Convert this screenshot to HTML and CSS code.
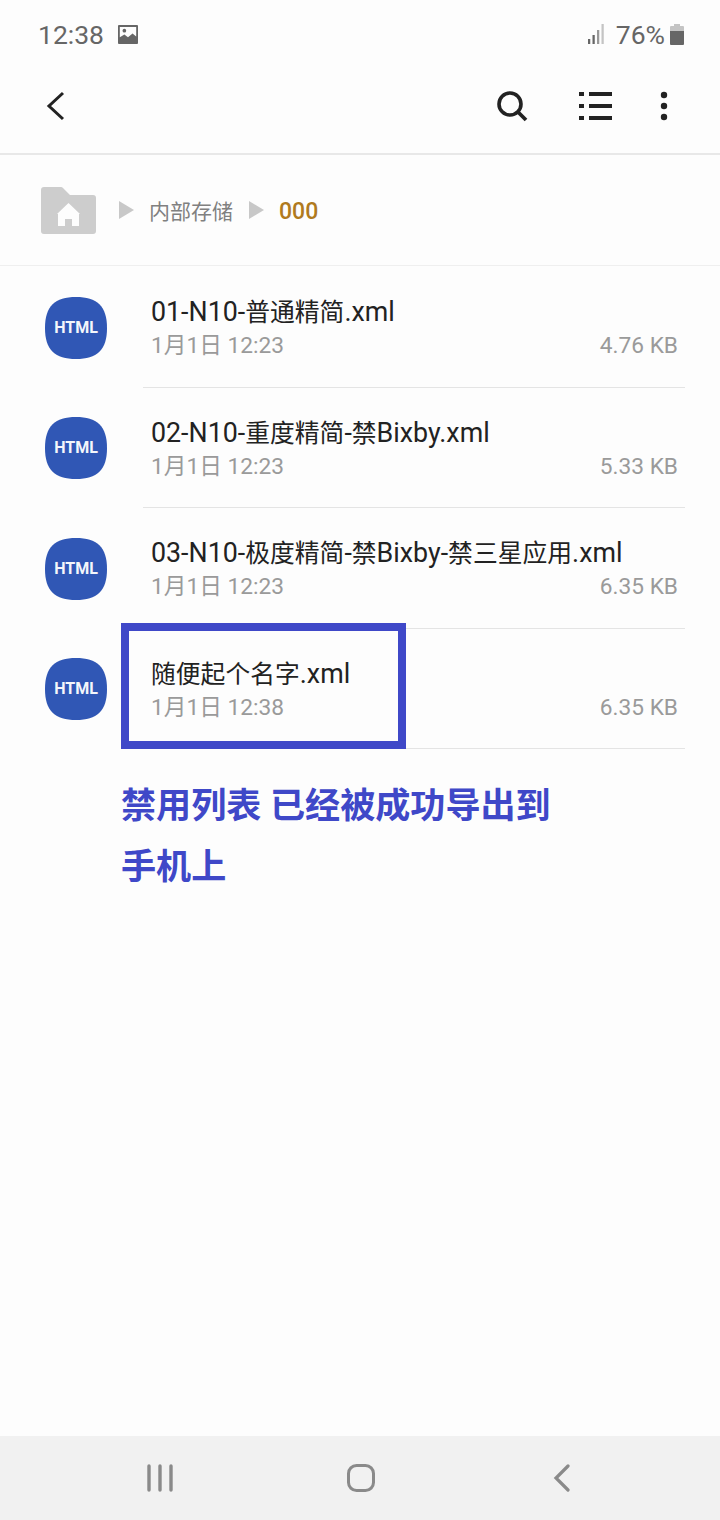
FILE: index.html
```html
<!DOCTYPE html>
<html lang="zh-CN">
<head>
    <meta charset="UTF-8">
    <meta name="viewport" content="width=device-width, initial-scale=1.0">
    <title>内部存储</title>
    <link rel="stylesheet" href="styles.css">
</head>
<body>
    <div class="phone">
        <div class="status-bar">
            <div class="status-left">
                <span class="clock">12:38</span>
                <svg class="status-pic" width="20" height="19" viewBox="0 0 22 20" preserveAspectRatio="none">
                    <path fill="#666" fill-rule="evenodd" d="M1 0h20a1 1 0 0 1 1 1v18a1 1 0 0 1-1 1H1a1 1 0 0 1-1-1V1a1 1 0 0 1 1-1zM2 2v11l5-3 4 3 5-4 4 3V2z"/>
                    <circle cx="7" cy="6" r="2" fill="#666"/>
                </svg>
            </div>
            <div class="status-right">
                <svg width="18" height="20" viewBox="0 0 20 20" preserveAspectRatio="none">
                    <rect x="0" y="15" width="2.500" height="5" fill="#666"/>
                    <rect x="5" y="11" width="2.500" height="9" fill="#666"/>
                    <rect x="10" y="6" width="2.500" height="14" fill="#999"/>
                    <rect x="15" y="0" width="2.500" height="20" fill="#c4c4c4"/>
                </svg>
                <span class="battery-text">76%</span>
                <svg width="14" height="21" viewBox="0 0 14 21">
                    <path fill="#c4c4c4" d="M4 0h6v2h3a1 1 0 0 1 1 1v5H0V3a1 1 0 0 1 1-1h3z"/>
                    <path fill="#666" d="M0 7h14v13a1 1 0 0 1-1 1H1a1 1 0 0 1-1-1z"/>
                </svg>
            </div>
        </div>

        <div class="toolbar">
            <svg class="back" width="20" height="30" viewBox="0 0 20 30">
                <path d="M17 2 L3 15 L17 28" fill="none" stroke="#222" stroke-width="3"/>
            </svg>
            <div class="toolbar-actions">
                <svg width="32" height="32" viewBox="0 0 32 32">
                    <circle cx="14" cy="14" r="11" fill="none" stroke="#222" stroke-width="3.600"/>
                    <path d="M22 22 L30 30" stroke="#222" stroke-width="3.800"/>
                </svg>
                <svg class="list-icon" width="34" height="30" viewBox="0 0 34 30">
                    <path fill="#222" d="M0 1h5v4H0zM10 1h23v4H10zM0 13h5v4H0zM10 13h23v4H10zM0 25h5v4H0zM10 25h23v4H10z"/>
                </svg>
                <svg width="8" height="30" viewBox="0 0 8 30">
                    <circle cx="4" cy="4" r="3.200" fill="#222"/>
                    <circle cx="4" cy="15" r="3.200" fill="#222"/>
                    <circle cx="4" cy="26" r="3.200" fill="#222"/>
                </svg>
            </div>
        </div>

        <div class="crumbs">
            <svg class="crumb-home" width="55" height="47" viewBox="0 0 55 47">
                <path fill="#cdcdcd" d="M3 0h17a3 3 0 0 1 2 1l7 7h23a3 3 0 0 1 3 3v33a3 3 0 0 1-3 3H3a3 3 0 0 1-3-3V3a3 3 0 0 1 3-3z"/>
                <path fill="#fdfdfd" d="M27.500 16 L39 27 H38 V39 H31 V32 H24 V39 H17 V27 H16 z"/>
            </svg>
            <span class="crumb-arrow"></span>
            <span class="crumb-text">内部存储</span>
            <span class="crumb-arrow"></span>
            <span class="crumb-current">000</span>
        </div>

        <div class="file-list">
            <div class="file-row">
                <svg class="file-icon" width="62" height="62" viewBox="0 0 62 62">
                    <path fill="#3057b5" d="M31 0C52 0 62 9 62 31S52 62 31 62 0 53 0 31 10 0 31 0z"/>
                    <text x="31" y="35.500" text-anchor="middle">HTML</text>
                </svg>
                <div class="file-info">
                    <div class="file-name">01-N10-<span class="cjk">普通精简</span>.xml</div>
                    <div class="file-meta"><span>1月1日 12:23</span><span>4.76 KB</span></div>
                </div>
            </div>
            <div class="file-row">
                <svg class="file-icon" width="62" height="62" viewBox="0 0 62 62">
                    <path fill="#3057b5" d="M31 0C52 0 62 9 62 31S52 62 31 62 0 53 0 31 10 0 31 0z"/>
                    <text x="31" y="35.500" text-anchor="middle">HTML</text>
                </svg>
                <div class="file-info">
                    <div class="file-name">02-N10-<span class="cjk">重度精简</span>-<span class="cjk">禁</span>Bixby.xml</div>
                    <div class="file-meta"><span>1月1日 12:23</span><span>5.33 KB</span></div>
                </div>
            </div>
            <div class="file-row">
                <svg class="file-icon" width="62" height="62" viewBox="0 0 62 62">
                    <path fill="#3057b5" d="M31 0C52 0 62 9 62 31S52 62 31 62 0 53 0 31 10 0 31 0z"/>
                    <text x="31" y="35.500" text-anchor="middle">HTML</text>
                </svg>
                <div class="file-info">
                    <div class="file-name">03-N10-<span class="cjk">极度精简</span>-<span class="cjk">禁</span>Bixby-<span class="cjk">禁三星应用</span>.xml</div>
                    <div class="file-meta"><span>1月1日 12:23</span><span>6.35 KB</span></div>
                </div>
            </div>
            <div class="file-row">
                <svg class="file-icon" width="62" height="62" viewBox="0 0 62 62">
                    <path fill="#3057b5" d="M31 0C52 0 62 9 62 31S52 62 31 62 0 53 0 31 10 0 31 0z"/>
                    <text x="31" y="35.500" text-anchor="middle">HTML</text>
                </svg>
                <div class="file-info">
                    <div class="file-name"><span class="cjk">随便起个名字</span>.xml</div>
                    <div class="file-meta"><span>1月1日 12:38</span><span>6.35 KB</span></div>
                </div>
                <div class="highlight-box"></div>
            </div>
        </div>

        <p class="note">禁用列表 已经被成功导出到<br>手机上</p>

        <div class="nav-bar">
            <svg width="28" height="28" viewBox="0 0 28 28">
                <path d="M3 2v24M14 2v24M25 2v24" stroke="#8a8a8a" stroke-width="3.400" stroke-linecap="round"/>
            </svg>
            <svg class="nav-home" width="28" height="28" viewBox="0 0 28 28">
                <rect x="1.500" y="1.500" width="25" height="25" rx="8" fill="none" stroke="#8a8a8a" stroke-width="3"/>
            </svg>
            <svg width="18" height="28" viewBox="0 0 18 28">
                <path d="M15 2 L3 14 L15 26" fill="none" stroke="#8a8a8a" stroke-width="3.200" stroke-linecap="round"/>
            </svg>
        </div>
    </div>
</body>
</html>
```

FILE: styles.css
```css
* {
    box-sizing: border-box;
}

body {
    margin: 0;
    background-color: #fdfdfd;
    font-family: Roboto, "Noto Sans CJK SC", sans-serif;
}

.phone {
    display: flex;
    flex-direction: column;
    width: 720px;
    height: 1520px;
    overflow: hidden;
}

.status-bar {
    display: flex;
    justify-content: space-between;
    align-items: center;
    height: 68px;
    padding: 0 36px 0 38px;
    color: #666;
}

.status-left,
.status-right {
    display: flex;
    align-items: center;
}

.clock {
    font-size: 26.500px;
}

.status-pic {
    margin-left: 14px;
}

.battery-text {
    margin: 0 5px 0 10px;
    font-size: 26.500px;
}

.toolbar {
    display: flex;
    justify-content: space-between;
    align-items: center;
    height: 87px;
    padding: 0 52px 10px 46px;
    border-bottom: 2px solid #e8e8e8;
}

.toolbar-actions {
    display: flex;
    align-items: center;
    gap: 47px;
}

.list-icon {
    margin-left: 4px;
}

.crumbs {
    display: flex;
    align-items: center;
    height: 111px;
    padding-left: 41px;
    border-bottom: 1px solid #efefef;
}

.crumb-arrow {
    width: 0;
    height: 0;
    border-left: 15px solid #c8c8c8;
    border-top: 9px solid transparent;
    border-bottom: 9px solid transparent;
}

.crumb-home + .crumb-arrow {
    margin-left: 23px;
}

.crumb-text {
    margin: 0 16px 0 15px;
    font-size: 21px;
    color: #808080;
}

.crumb-current {
    margin: 2px 0 0 15px;
    font-size: 23px;
    font-weight: 500;
    color: #b07a1e;
}

.file-list {
    padding-top: 1px;
}

.file-row {
    position: relative;
    display: flex;
    align-items: center;
    height: 120.500px;
    padding-left: 45px;
}

.file-icon {
    flex-shrink: 0;
    margin-top: 1px;
}

.file-icon text {
    fill: #f4f6fb;
    font-size: 16px;
    font-weight: 700;
}

.file-info {
    align-self: stretch;
    flex: 1;
    margin: 0 35px 0 36px;
    padding: 27px 7px 0 8px;
    border-bottom: 1px solid #e4e4e4;
}

.file-name {
    font-size: 26.800px;
    line-height: 37px;
    color: #222;
}

/* CJK glyphs sit a little smaller than the latin in this name */
.cjk {
    font-size: 24.800px;
}

.file-meta {
    display: flex;
    justify-content: space-between;
    font-size: 22.700px;
    line-height: 30px;
    color: #9a9a9a;
}

.highlight-box {
    position: absolute;
    left: 121px;
    top: -6px;
    width: 285px;
    height: 126px;
    border: 8px solid #3f48c8;
}

.note {
    flex: 1;
    margin: 27px 0 0 121px;
    font-size: 35.100px;
    font-weight: 700;
    line-height: 61px;
    color: #3f48c8;
}

.nav-bar {
    display: flex;
    align-items: center;
    justify-content: space-between;
    height: 84px;
    padding: 0 149px 0 146px;
    background-color: #f1f1f1;
}

.nav-home {
    margin-right: 5px;
}
```
